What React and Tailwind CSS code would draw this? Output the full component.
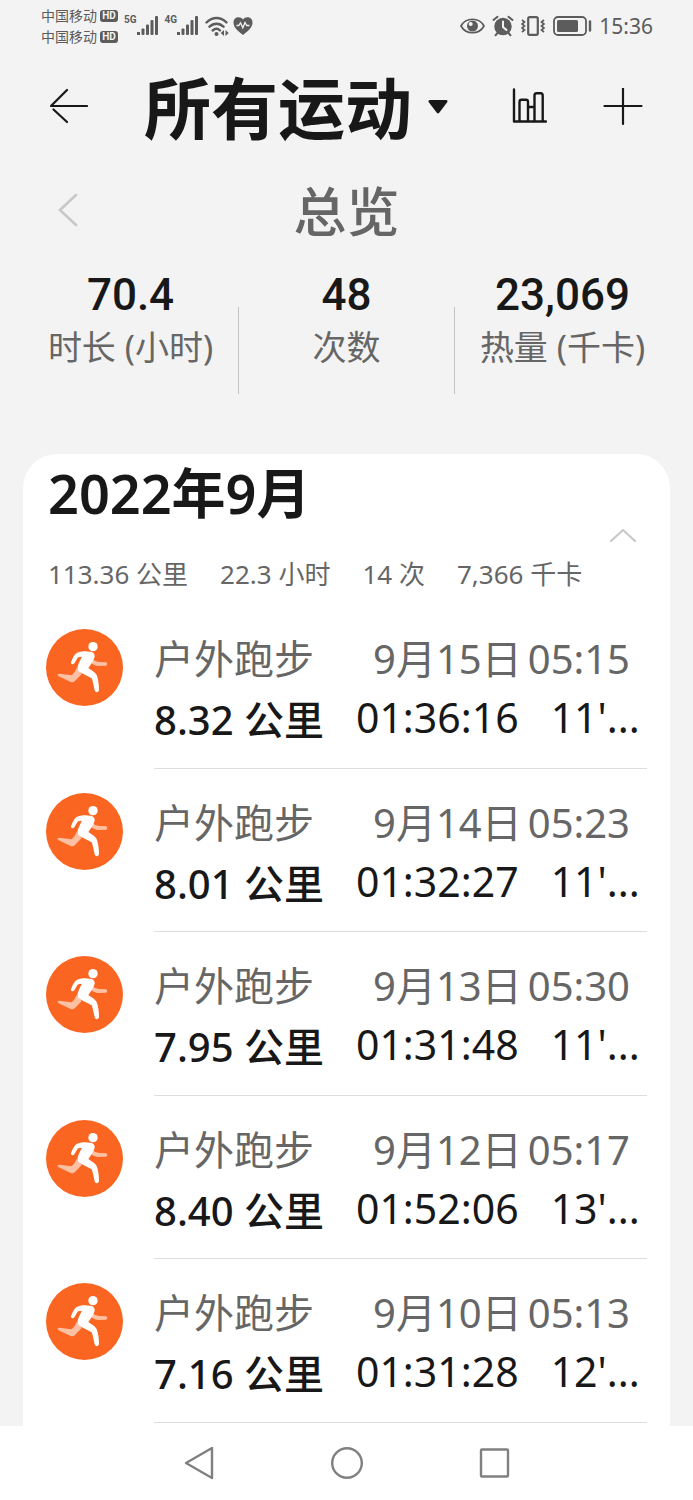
const runs = [
  { date: '9月15日', clock: '05:15', distance: '8.32', duration: '01:36:16', pace: "11'..." },
  { date: '9月14日', clock: '05:23', distance: '8.01', duration: '01:32:27', pace: "11'..." },
  { date: '9月13日', clock: '05:30', distance: '7.95', duration: '01:31:48', pace: "11'..." },
  { date: '9月12日', clock: '05:17', distance: '8.40', duration: '01:52:06', pace: "13'..." },
  { date: '9月10日', clock: '05:13', distance: '7.16', duration: '01:31:28', pace: "12'..." },
];

function Carrier() {
  return (
    <div className="flex items-center gap-[3px]">
      <span>中国移动</span>
      <span className="flex h-3 w-[18px] items-center justify-center rounded-[3px] bg-[#5c5c5c] font-['Roboto','Noto_Sans_CJK_SC',sans-serif] text-[10px] font-bold text-[#f3f3f3]">HD</span>
    </div>
  );
}

function Signal({ label }) {
  return (
    <div className="flex items-start">
      <span className="font-['Roboto',sans-serif] text-[10px] leading-3 font-bold">{label}</span>
      <svg className="h-6 w-[22px]" viewBox="0 0 22 24" fill="currentColor" aria-hidden="true">
        <rect x="0" y="18" width="3" height="3" />
        <rect x="4.500" y="14.500" width="3" height="6.500" rx="1" />
        <rect x="9" y="10.500" width="3" height="10.500" rx="1" />
        <rect x="13.500" y="6" width="3" height="15" rx="1" />
        <rect x="18" y="2" width="3" height="19" rx="1" />
      </svg>
    </div>
  );
}

function StatusBar() {
  return (
    <div className="flex h-[52px] items-center justify-between pr-10 pl-[41px] text-[#5c5c5c]">
      <div className="flex items-center gap-[6px]">
        <div className="text-[14px] leading-[21px]">
          <Carrier />
          <Carrier />
        </div>
        <Signal label="5G" />
        <Signal label="4G" />
        <div className="flex items-center gap-1">
          <svg className="h-6 w-6" viewBox="0 0 24 24" fill="none" stroke="currentColor" strokeWidth="2.400" strokeLinecap="round" aria-hidden="true">
            <path d="M1.500 8.500C7.500 2.500 15.500 2.500 21.500 8.500M4.500 12.700c4-4 10-4 14 0M7.700 16.500c2.500-2.300 5-2.300 7.300 0" />
            <circle cx="11.500" cy="20" r="2" fill="currentColor" stroke="none" />
            <path d="M19 16v6l-3.200-3zM20.500 16v6l3.200-3z" fill="currentColor" stroke="none" />
          </svg>
          <svg className="h-[18px] w-5" viewBox="0 0 20 18" aria-hidden="true">
            <path d="M10 18C4 13.500.5 10 .5 5.500.5 0 7-1.500 10 2.500 13-1.500 19.500 0 19.500 5.500 19.500 10 16 13.500 10 18z" fill="currentColor" />
            <path d="M3.500 8.500h2.300l1.700-2.700 2.300 5 2.200-5.300 1.700 3h2.800" fill="none" stroke="#f3f3f3" strokeWidth="1.300" />
          </svg>
        </div>
      </div>
      <div className="flex items-center gap-[7px]">
        <svg className="h-4 w-[25px]" viewBox="0 0 25 16" fill="none" stroke="currentColor" strokeWidth="1.700" aria-hidden="true">
          <path d="M1 8C6-1 19-1 24 8 19 17 6 17 1 8z" />
          <circle cx="12.500" cy="8" r="5.500" fill="currentColor" stroke="none" />
          <circle cx="10.700" cy="6" r="2" fill="#f3f3f3" stroke="none" />
        </svg>
        <svg className="h-[22px] w-[22px]" viewBox="0 0 22 22" fill="none" stroke="currentColor" strokeLinecap="round" aria-hidden="true">
          <circle cx="11" cy="11.500" r="8.700" fill="currentColor" stroke="none" />
          <path d="M1.500 5 5.500 1.800M20.500 5l-4-3.200M5.500 18 3.500 20.300M16.500 18l2 2.300" strokeWidth="2" />
          <path d="M11 6.500V12l3.500 3" stroke="#f3f3f3" strokeWidth="2" />
        </svg>
        <svg className="h-5 w-6" viewBox="0 0 24 20" fill="none" stroke="currentColor" aria-hidden="true">
          <rect x="7.200" y="1.200" width="9.600" height="17.600" rx="1.500" strokeWidth="2.200" />
          <path d="M1 4l2.500 2L1 8l2.500 2L1 12l2.500 2L1 16M23 4l-2.500 2L23 8l-2.500 2L23 12l-2.500 2 2.500 2" strokeWidth="1.700" />
        </svg>
        <svg className="h-5 w-10" viewBox="0 0 40 20" fill="none" stroke="currentColor" aria-hidden="true">
          <rect x="2" y="1" width="32" height="18" rx="4" strokeWidth="1.800" />
          <rect x="5" y="4" width="21" height="12" rx="1.500" fill="currentColor" stroke="none" />
          <path d="M38 5.500v9" strokeWidth="2.400" strokeLinecap="round" />
        </svg>
        <span className="text-[21px] leading-6">15:36</span>
      </div>
    </div>
  );
}

function Header() {
  return (
    <header className="flex h-[112px] items-center pr-[50px] pl-12 text-[#181818]">
      <button type="button" aria-label="返回" className="mr-14">
        <svg className="h-10 w-10" viewBox="0 0 40 40" fill="none" stroke="currentColor" strokeWidth="2.200" strokeLinecap="round" strokeLinejoin="round">
          <path d="M39 18H3L19 2M5.500 21.500 19 34" />
        </svg>
      </button>
      <button type="button" className="flex items-center gap-4">
        <h1 className="text-[67px] leading-[80px] font-bold whitespace-nowrap">所有运动</h1>
        <svg className="h-4 w-5" viewBox="0 0 20 16" fill="currentColor" aria-hidden="true">
          <path d="M2 0h16c1.500 0 2 1.200 1.200 2.200l-8 10.500c-.7.9-1.700.9-2.400 0L.8 2.200C0 1.200.5 0 2 0z" />
        </svg>
      </button>
      <div className="ml-auto flex items-center gap-14">
        <button type="button" aria-label="统计">
          <svg className="h-10 w-9" viewBox="0 0 36 40" fill="none" stroke="currentColor" strokeWidth="2.400" strokeLinecap="round" strokeLinejoin="round">
            <path d="M3 1.500v32h32M8.500 33V14c0-1.500.8-2.200 2-2.200H15c1.300 0 2 .8 2 2.200v19M17 19h6.500M23.500 33V7.500c0-1.500.8-2.300 2-2.300h4.200c1.300 0 2 .8 2 2.300V33" />
          </svg>
        </button>
        <button type="button" aria-label="添加">
          <svg className="h-10 w-10" viewBox="0 0 40 40" fill="none" stroke="currentColor" strokeWidth="2.200" strokeLinecap="round">
            <path d="M20 0v36M1.500 18h37" />
          </svg>
        </button>
      </div>
    </header>
  );
}

function Stat({ value, label }) {
  return (
    <div className="flex-1 text-center">
      <p className="font-['Roboto',sans-serif] text-[44px] leading-[54px] font-medium text-[#181818]">{value}</p>
      <p className="text-[34px] leading-[50px] whitespace-nowrap text-[#666]">{label}</p>
    </div>
  );
}

function Overview() {
  return (
    <section>
      <div className="grid h-24 grid-cols-3 items-center px-[50px]">
        <button type="button" aria-label="上一项" className="justify-self-start text-[#c8c8c8]">
          <svg className="h-9 w-9" viewBox="0 0 36 36" fill="none" stroke="currentColor" strokeWidth="2.600" strokeLinecap="round" strokeLinejoin="round">
            <path d="M26 1 10 16l16 15" />
          </svg>
        </button>
        <h2 className="text-center text-[53px] leading-[64px] font-medium text-[#666]">总览</h2>
      </div>
      <div className="flex px-[23px] pt-2 pb-[60px]">
        <Stat value="70.4" label="时长 (小时)" />
        <div className="mt-[39px] h-[87px] w-px bg-[#c4c4c4]" />
        <Stat value="48" label="次数" />
        <div className="mt-[39px] h-[87px] w-px bg-[#c4c4c4]" />
        <Stat value="23,069" label="热量 (千卡)" />
      </div>
    </section>
  );
}

function RunnerIcon() {
  return (
    <svg className="h-[77px] w-[77px] shrink-0" viewBox="31 26 231 231" aria-hidden="true">
      <circle cx="146.500" cy="141.500" r="115.500" fill="#fb6522" />
      <g fill="#fdc0a3">
        <path d="M168 116c8 5 14 8 22 9l21 1c5 1 5 9 0 10l-24 1c-9-1-17-5-24-11z" />
        <path d="M123 143c-4 10-9 17-16 22l-36-5c-6 0-7 5-2 8l36 17c5 2 9 1 13-3l20-21z" />
      </g>
      <g fill="#fff">
        <circle cx="172" cy="79" r="14" />
        <path d="M148 93c-10-1-21 2-29 8-6 8-10 16-13 25-1 6 7 8 10 3l11-18 12-2c-5 9-10 19-13 29-2 8 1 14 7 18l35 18c4 10 6 23 9 36 2 8 12 7 13-1 0-15-2-31-7-45-5-8-15-14-25-21 8-12 16-22 19-34 1-10-6-15-14-15z" />
      </g>
    </svg>
  );
}

function RunRow({ run }) {
  return (
    <li className="flex flex-1 gap-[31px] pt-6">
      <RunnerIcon />
      <div className="min-w-0 flex-1 border-b border-[#dedede] text-[40px] leading-[60px] whitespace-nowrap">
        <div className="flex justify-between pr-[17px] text-[#666]">
          <span>户外跑步</span>
          <time className="flex gap-[6px]">
            <span>{run.date}</span>
            <span>{run.clock}</span>
          </time>
        </div>
        <div className="flex gap-8 text-[#181818]">
          <span className="leading-[62px] font-medium">{run.distance} 公里</span>
          <span className="text-[41px] leading-[56px]">{run.duration}</span>
          <span className="text-[41px] leading-[56px]">{run.pace}</span>
        </div>
      </div>
    </li>
  );
}

function MonthCard() {
  return (
    <section className="mx-[23px] flex flex-1 flex-col rounded-t-[34px] bg-white pt-1 pb-[3px]">
      <div className="px-[25px]">
        <h2 className="text-[54px] leading-[70px] font-semibold text-[#181818]">2022年9月</h2>
        <button type="button" aria-label="收起" className="ml-auto block pr-2 text-[#c8c8c8]">
          <svg className="h-4 w-7" viewBox="0 0 28 16" fill="none" stroke="currentColor" strokeWidth="2.200" strokeLinecap="round" strokeLinejoin="round">
            <path d="M2 13 14 2l12 11" />
          </svg>
        </button>
        <div className="flex gap-8 text-[26px] leading-[61px] whitespace-nowrap text-[#666]">
          <span>113.36 公里</span>
          <span>22.3 小时</span>
          <span>14 次</span>
          <span>7,366 千卡</span>
        </div>
      </div>
      <ul className="flex flex-1 flex-col px-[23px]">
        {runs.map((run) => <RunRow key={run.date} run={run} />)}
      </ul>
    </section>
  );
}

function NavBar() {
  return (
    <nav className="flex h-[74px] items-center justify-center gap-28 bg-white text-[#808080]">
      <button type="button" aria-label="后退">
        <svg className="h-9 w-9" viewBox="0 0 36 36" fill="none" stroke="currentColor" strokeWidth="2.400" strokeLinejoin="round">
          <path d="M31 3v30L5 18z" />
        </svg>
      </button>
      <button type="button" aria-label="主页">
        <svg className="h-9 w-9" viewBox="0 0 36 36" fill="none" stroke="currentColor" strokeWidth="2.400">
          <circle cx="18" cy="18" r="14.800" />
        </svg>
      </button>
      <button type="button" aria-label="最近任务">
        <svg className="h-9 w-9" viewBox="0 0 36 36" fill="none" stroke="currentColor" strokeWidth="2.400">
          <rect x="4" y="4.500" width="27" height="27" rx="1" />
        </svg>
      </button>
    </nav>
  );
}

function App() {
  return (
    <div className="flex min-h-screen flex-col bg-[#f3f3f3] font-['Noto_Sans','Noto_Sans_CJK_SC',sans-serif]" lang="zh-CN">
      <StatusBar />
      <Header />
      <main className="flex flex-1 flex-col">
        <Overview />
        <MonthCard />
      </main>
      <NavBar />
    </div>
  );
}

export default App;
